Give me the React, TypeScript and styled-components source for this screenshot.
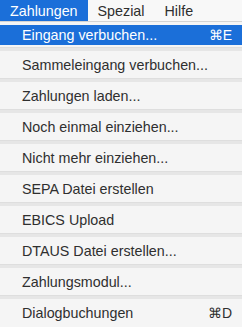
import { createGlobalStyle, styled } from "styled-components";

const GlobalStyle = createGlobalStyle`
  html, body {
    margin: 0;
    padding: 0;
    background: #f5f5f5;
    font-family: "Liberation Sans", Arial, sans-serif;
  }
`;

const menus = ["Zahlungen", "Spezial", "Hilfe"];

const items: { label: string; shortcut?: string }[] = [
  { label: "Eingang verbuchen...", shortcut: "⌘E" },
  { label: "Sammeleingang verbuchen..." },
  { label: "Zahlungen laden..." },
  { label: "Noch einmal einziehen..." },
  { label: "Nicht mehr einziehen..." },
  { label: "SEPA Datei erstellen" },
  { label: "EBICS Upload" },
  { label: "DTAUS Datei erstellen..." },
  { label: "Zahlungsmodul..." },
  { label: "Dialogbuchungen", shortcut: "⌘D" },
];

const App = () => {
  return (
    <>
      <GlobalStyle />
      <StyledPage>
        <StyledMenuBar>
          {menus.map((m, i) => (
            <StyledMenuTitle key={m} $active={i === 0}>
              {m}
            </StyledMenuTitle>
          ))}
        </StyledMenuBar>
        <StyledMenu>
          {items.map((item, i) => (
            <div key={item.label}>
              {i > 0 && <StyledSeparator />}
              <StyledItem $selected={i === 0} $first={i === 0}>
                <span>{item.label}</span>
                {item.shortcut && <StyledShortcut>{item.shortcut}</StyledShortcut>}
              </StyledItem>
            </div>
          ))}
        </StyledMenu>
      </StyledPage>
    </>
  );
};

export default App;

const StyledPage = styled.div`
  width: 242px;
  height: 327px;
  overflow: hidden;
  background: #f5f5f5;
`;

const StyledMenuBar = styled.div`
  display: flex;
  height: 21px;
  background: #f8f8f8;
  border-bottom: 1px solid #d4d4d4;
`;

const StyledMenuTitle = styled.div<{ $active: boolean }>`
  display: flex;
  align-items: center;
  padding: 0 10px;
  font-size: 14.3px;
  color: ${(p) => (p.$active ? "#ffffff" : "#2e2e2e")};
  background: ${(p) => (p.$active ? "#1b6fd9" : "transparent")};
`;

const StyledMenu = styled.div`
  display: flex;
  flex-direction: column;
  padding-top: 3px;
  background: #f5f5f5;
`;

const StyledItem = styled.div<{ $selected: boolean; $first: boolean }>`
  display: flex;
  align-items: center;
  justify-content: space-between;
  height: ${(p) => (p.$first ? "20px" : "27px")};
  margin-bottom: ${(p) => (p.$first ? "2px" : "0")};
  padding: 0 10px 0 22px;
  font-size: 14.3px;
  color: ${(p) => (p.$selected ? "#ffffff" : "#2f2f2f")};
  background: ${(p) => (p.$selected ? "#1b6fd9" : "#f5f5f5")};
`;

const StyledShortcut = styled.span`
  font-size: 14px;
`;

const StyledSeparator = styled.div`
  height: 3px;
  background: #e6e6e6;
  border-top: 1px solid #dedede;
`;
